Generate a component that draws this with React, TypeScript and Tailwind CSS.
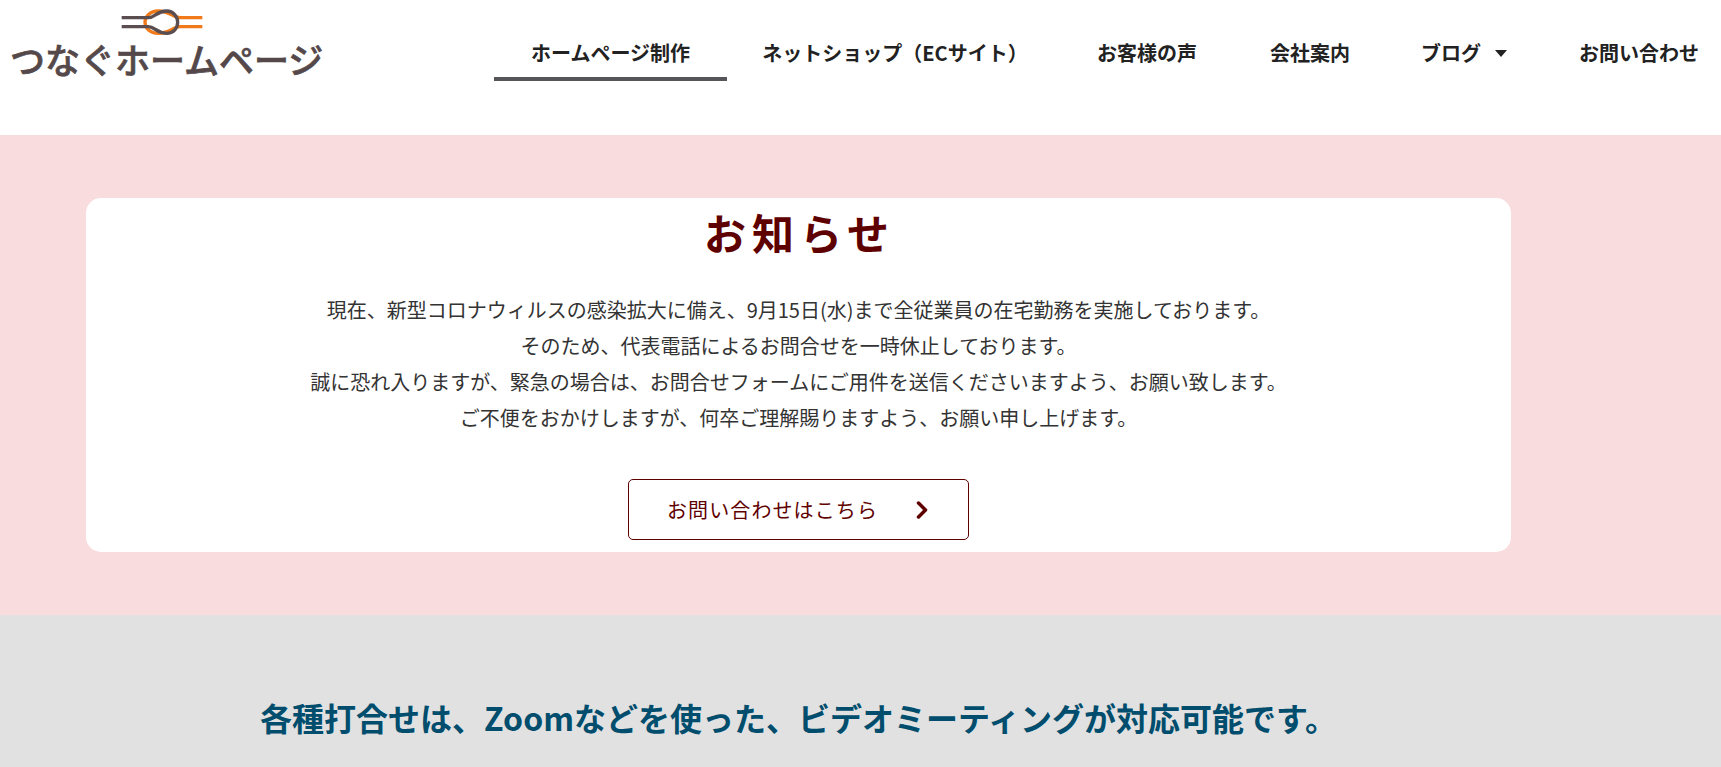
import { ChevronRight } from 'lucide-react'

const font = { fontFamily: '"Noto Sans CJK JP", "Noto Sans", sans-serif' }

const navItems = [
  { label: 'ホームページ制作', width: 'w-[233px]', active: true },
  { label: 'ネットショップ（ECサイト）', width: 'w-[336px]' },
  { label: 'お客様の声', width: 'w-[168px]' },
  { label: '会社案内', width: 'w-[120px] ml-[19px]' },
  { label: 'ブログ', width: 'w-[170px] ml-[9px]', caret: true },
  { label: 'お問い合わせ', width: 'w-[180px]' },
]

const notice = [
  '現在、新型コロナウィルスの感染拡大に備え、9月15日(水)まで全従業員の在宅勤務を実施しております。',
  'そのため、代表電話によるお問合せを一時休止しております。',
  '誠に恐れ入りますが、緊急の場合は、お問合せフォームにご用件を送信くださいますよう、お願い致します。',
  'ご不便をおかけしますが、何卒ご理解賜りますよう、お願い申し上げます。',
]

function Logo() {
  return (
    <div className="w-[330px] pl-[10px] pt-[5px] shrink-0">
      <svg width="95" height="36" viewBox="0 0 285 108" fill="none" className="ml-[105px] block">
        <path
          d="M262 38H195C175 38 165 18 130 18C105 18 90 35 90 52C90 70 105 85 130 85C165 85 175 65 195 65H262"
          stroke="#f07a1a"
          strokeWidth="10"
        />
        <path
          d="M20 38H100C120 38 125 18 155 18C175 18 188 35 188 52C188 70 175 85 155 85C125 85 120 65 100 65H20"
          stroke="#5a4e50"
          strokeWidth="10"
        />
      </svg>
      <div className="text-[35px] leading-[40px] mt-[-2px] font-medium [-webkit-text-stroke:0.7px_#54484a] text-[#54484a] whitespace-nowrap">
        つなぐホームページ
      </div>
    </div>
  )
}

export default function App() {
  return (
    <div className="h-[767px] overflow-hidden bg-white" style={font}>
      <header className="h-[135px] flex items-start">
        <Logo />
        <nav className="flex ml-[164px] pt-[34px]">
          {navItems.map((item) => (
            <a
              key={item.label}
              className={`${item.width} shrink-0 h-[47px] flex items-start justify-center pt-[6px] text-[20px] leading-[26px] font-bold text-[#222] whitespace-nowrap ${item.active ? 'border-b-[4px] border-[#55555a]' : ''}`}
            >
              {item.label}
              {item.caret && (
                <span className="ml-[14px] mt-[10px] w-0 h-0 border-x-[6px] border-x-transparent border-t-[7px] border-t-[#222]" />
              )}
            </a>
          ))}
        </nav>
      </header>

      <section className="h-[480px] bg-[#f9dcde] pt-[63px] pl-[86px]">
        <div className="w-[1425px] h-[354px] bg-white rounded-[15px] flex flex-col items-center">
          <h2 className="text-[42px] leading-[60px] font-bold text-[#5f0000] tracking-[6px] mt-[4px] ml-[2px]">お知らせ</h2>
          <div className="mt-[30px] text-[20px] leading-[36px] text-[#333] text-center">
            {notice.map((line) => (
              <p key={line}>{line}</p>
            ))}
          </div>
          <a className="mt-[43px] w-[341px] h-[61px] border border-[#5f0000] rounded-[5px] flex items-center pl-[38px] text-[20px] tracking-[1.1px] text-[#5f0000]">
            お問い合わせはこちら
            <ChevronRight className="ml-[30px]" size={28} strokeWidth={3} />
          </a>
        </div>
      </section>

      <section className="h-[152px] bg-[#e1e1e1] pt-[79px] text-center">
        <h2 className="text-[32px] leading-[46px] font-bold text-[#004d6d] ml-[-124px]">
          各種打合せは、Zoomなどを使った、ビデオミーティングが対応可能です。
        </h2>
      </section>
    </div>
  )
}
